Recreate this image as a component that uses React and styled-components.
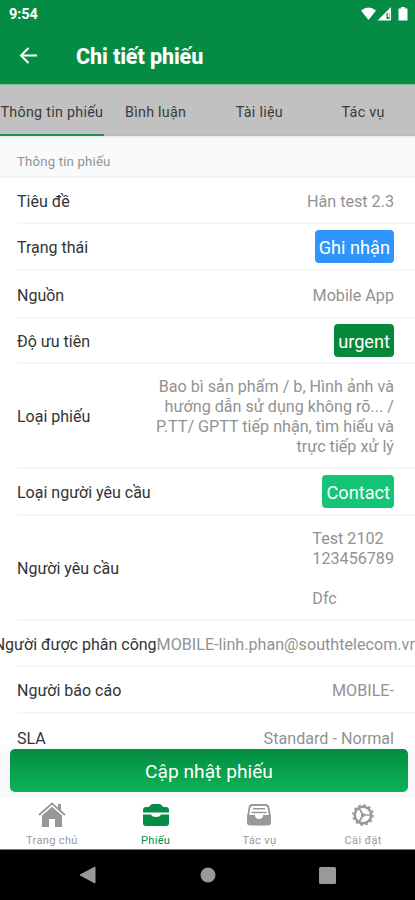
import styled, { createGlobalStyle } from 'styled-components'

const GlobalStyle = createGlobalStyle`
  * {
    box-sizing: border-box;
  }

  body {
    margin: 0;
    background: #fff;
    font-family: Roboto, "Liberation Sans", sans-serif;
  }
`

const Screen = styled.div`
  display: flex;
  flex-direction: column;
  width: 415px;
  height: 900px;
  overflow: hidden;
  background: #fff;
`

const Header = styled.header`
  flex: none;
  height: 85px;
  background: #048c44;
  border-bottom: 1px solid #7cc294;
  color: #fff;
`

const StatusBar = styled.div`
  display: flex;
  align-items: center;
  justify-content: space-between;
  height: 28px;
  padding: 0 7px 0 9px;
`

const Clock = styled.span`
  font-size: 14.500px;
  font-weight: 700;
  letter-spacing: -0.1px;
`

const TitleBar = styled.div`
  display: flex;
  align-items: center;
  height: 56px;
  padding-left: 19px;
`

const Title = styled.h1`
  margin: 1px 0 0 38px;
  font-size: 21.500px;
  font-weight: 800;
  letter-spacing: -0.1px;
`

const Tabs = styled.nav`
  display: grid;
  grid-template-columns: repeat(4, 1fr);
  flex: none;
  height: 51px;
  background: #c1c1c1;
`

const Tab = styled.a`
  display: flex;
  align-items: center;
  justify-content: center;
  padding-top: 4px;
  border-bottom: 2px solid ${props => props.$active ? '#1f9150' : '#bcbcbc'};
  color: #3a3a3a;
  font-size: 14.300px;
  letter-spacing: 0.28px;
  white-space: nowrap;
`

const SectionTitle = styled.h2`
  flex: none;
  height: 42px;
  margin: 0;
  padding: 11px 17px 0;
  border-bottom: 2px solid #f2f3f4;
  background: #f8fafc;
  box-shadow: inset 0 3px 3px -2px #e4e5e6;
  color: #929292;
  font-size: 13.200px;
  font-weight: 400;
  line-height: 30px;
  letter-spacing: 0.18px;
`

const List = styled.div`
  flex: 1;
  min-height: 0;
  overflow: hidden;
`

const Row = styled.div`
  display: flex;
  align-items: center;
  justify-content: ${props => props.$overflowing ? 'center' : 'space-between'};
  height: ${props => props.$height}px;
  margin-left: 17px;
  padding-top: 2px;
  padding-right: ${props => props.$overflowing ? 20 : 21}px;
  border-bottom: 2px solid #f5f5f5;
  font-size: 16px;
  white-space: nowrap;
`

const Label = styled.span`
  flex: none;
  color: #333;
`

const Value = styled.span`
  flex: none;
  padding-top: 1px;
  color: #929292;
  font-size: 16.150px;
  line-height: 20px;
  text-align: ${props => props.$align || 'right'};
  white-space: pre;
`

const Tag = styled.span`
  height: 33px;
  margin-top: -2px;
  padding: 0 4px;
  border-radius: 4px;
  background: ${props => props.$color};
  color: #fff;
  font-size: 18.200px;
  line-height: 35px;
`

const Footer = styled.div`
  flex: none;
  height: 53px;
  padding: 4px 7px 0 10px;
  background: #f9fafc;
`

const UpdateButton = styled.button`
  display: block;
  width: 100%;
  height: 43px;
  padding: 2px 0 0;
  border: 0;
  border-radius: 5px;
  background: linear-gradient(#048c42, #0cb356);
  color: #fff;
  font-family: inherit;
  font-size: 19.200px;
`

const BottomTabs = styled.nav`
  display: grid;
  grid-template-columns: repeat(4, 1fr);
  flex: none;
  height: 52px;
  border-bottom: 1px solid #777;
`

const BottomTab = styled.a`
  display: flex;
  flex-direction: column;
  align-items: center;
  gap: 5px;
  padding-top: 4px;
  color: ${props => props.$active ? '#058d45' : '#989898'};
  font-size: 11px;
  line-height: 15px;
  letter-spacing: 0.35px;
`

const SystemBar = styled.div`
  display: flex;
  align-items: center;
  justify-content: space-between;
  flex: none;
  height: 50px;
  padding: 0 79px;
  background: #000;
`

const StatusIcons = () => (
  <svg width="47" height="16" viewBox="0 0 47 16" fill="#fff">
    <path d="M0 4.500Q7.500-1.500 15 4.500L7.500 14Z" />
    <path fillRule="evenodd" d="M16.500 14.500L30 1v13.500ZM25.500 7v6h3V7Z" />
    <path d="M26.800 7h1.200v4h-1.200z" />
    <path d="M37.500 2.500H40V1h4v1.500h2.500v12h-9Z" />
  </svg>
)

const BackIcon = () => (
  <svg width="19" height="18" viewBox="0 0 19 18" fill="none" stroke="#fff" strokeWidth="2">
    <path d="M18 8.500H2M9.500 1L2 8.500 9.500 16" />
  </svg>
)

const HomeIcon = () => (
  <svg width="28" height="26" viewBox="0 0 28 26" fill="currentColor">
    <path d="M14 4.800l10 8.700V25h-7v-8h-6v8H4V13.500Z" />
    <path d="M1 13L14 1.500 27 13" fill="none" stroke="#fff" strokeWidth="4" />
    <path d="M1 13L14 1.500 27 13" fill="none" stroke="currentColor" strokeWidth="1.800" />
    <path d="M20 2h3v7l-3-2.600Z" />
  </svg>
)

const TicketIcon = () => (
  <svg width="28" height="26" viewBox="0 0 28 26" fill="currentColor">
    <path d="M1 10.500V8q0-3 3-3h2q1 0 2-1.500T11 2h6q2 0 3 1.500T22 5h2q3 0 3 3v2.500Z" />
    <path d="M1 12.500h8q1 2.500 5 2.500t5-2.500h8V21q0 3-3 3H4q-3 0-3-3Z" />
  </svg>
)

const InboxIcon = () => (
  <svg width="28" height="26" viewBox="0 0 28 26" fill="currentColor">
    <path d="M3 15L4.500 5.500Q5 3 7.500 3h13Q23 3 23.500 5.500L25 15" fill="none" stroke="currentColor" strokeWidth="1.800" />
    <path d="M8 6.700h12M6.500 10.500h15" stroke="currentColor" strokeWidth="1.400" />
    <path d="M2 13h8q0 4 4 4t4-4h8v7.500q0 3-3 3H5q-3 0-3-3Z" />
  </svg>
)

const SettingsIcon = () => (
  <svg width="28" height="26" viewBox="0 0 28 26" fill="none" stroke="currentColor">
    <circle cx="14" cy="13" r="8.200" strokeWidth="2.400" />
    <circle cx="14" cy="13" r="10" strokeWidth="1.600" strokeDasharray="2.618 2.618" />
    <path d="M14 13h8M14 13L10 6M14 13l-4 7" strokeWidth="1.700" />
    <circle cx="14" cy="13" r="1.500" fill="currentColor" />
  </svg>
)

const App = () => {
  return (
    <Screen>
      <GlobalStyle />
      <Header>
        <StatusBar>
          <Clock>9:54</Clock>
          <StatusIcons />
        </StatusBar>
        <TitleBar>
          <BackIcon />
          <Title>Chi tiết phiếu</Title>
        </TitleBar>
      </Header>
      <Tabs>
        <Tab $active>Thông tin phiếu</Tab>
        <Tab>Bình luận</Tab>
        <Tab>Tài liệu</Tab>
        <Tab>Tác vụ</Tab>
      </Tabs>
      <SectionTitle>Thông tin phiếu</SectionTitle>
      <List>
        <Row $height={46}>
          <Label>Tiêu đề</Label>
          <Value>Hân test 2.3</Value>
        </Row>
        <Row $height={47}>
          <Label>Trạng thái</Label>
          <Tag $color="#2d95fb">Ghi nhận</Tag>
        </Row>
        <Row $height={48}>
          <Label>Nguồn</Label>
          <Value>Mobile App</Value>
        </Row>
        <Row $height={45}>
          <Label>Độ ưu tiên</Label>
          <Tag $color="#05883a">urgent</Tag>
        </Row>
        <Row $height={105}>
          <Label>Loại phiếu</Label>
          <Value>{'Bao bì sản phẩm / b, Hình ảnh và\nhướng dẫn sử dụng không rõ... /\nP.TT/ GPTT tiếp nhận, tìm hiểu và\ntrực tiếp xử lý'}</Value>
        </Row>
        <Row $height={47}>
          <Label>Loại người yêu cầu</Label>
          <Tag $color="#14c477">Contact</Tag>
        </Row>
        <Row $height={105}>
          <Label>Người yêu cầu</Label>
          <Value $align="left">{'Test 2102\n123456789\n\nDfc'}</Value>
        </Row>
        {/* el contenido es más ancho que la pantalla y se sale por los dos lados */}
        <Row $height={46} $overflowing>
          <Label>Người được phân công</Label>
          <Value>MOBILE-linh.phan@southtelecom.vn</Value>
        </Row>
        <Row $height={47}>
          <Label>Người báo cáo</Label>
          <Value>MOBILE-</Value>
        </Row>
        <Row $height={48}>
          <Label>SLA</Label>
          <Value>Standard - Normal</Value>
        </Row>
      </List>
      <Footer>
        <UpdateButton>Cập nhật phiếu</UpdateButton>
      </Footer>
      <BottomTabs>
        <BottomTab><HomeIcon />Trang chủ</BottomTab>
        <BottomTab $active><TicketIcon />Phiếu</BottomTab>
        <BottomTab><InboxIcon />Tác vụ</BottomTab>
        <BottomTab><SettingsIcon />Cài đặt</BottomTab>
      </BottomTabs>
      <SystemBar>
        <svg width="17" height="18" viewBox="0 0 17 18" fill="#999"><path d="M16 1v16L1 9Z" stroke="#999" strokeLinejoin="round" /></svg>
        <svg width="16" height="16" viewBox="0 0 16 16" fill="#999"><circle cx="8" cy="8" r="7.500" /></svg>
        <svg width="17" height="17" viewBox="0 0 17 17" fill="#999"><rect width="17" height="17" rx="1.500" /></svg>
      </SystemBar>
    </Screen>
  )
}

export default App
